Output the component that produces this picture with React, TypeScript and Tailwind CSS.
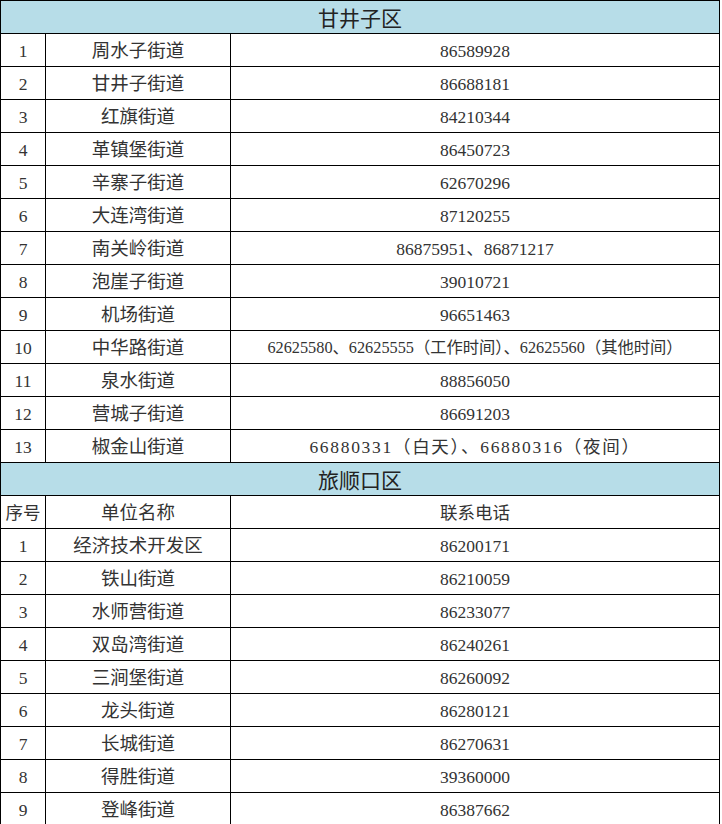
const ganjingzi: [string, string][] = [
  ["周水子街道", "86589928"],
  ["甘井子街道", "86688181"],
  ["红旗街道", "84210344"],
  ["革镇堡街道", "86450723"],
  ["辛寨子街道", "62670296"],
  ["大连湾街道", "87120255"],
  ["南关岭街道", "86875951、86871217"],
  ["泡崖子街道", "39010721"],
  ["机场街道", "96651463"],
  ["中华路街道", "62625580、62625555（工作时间）、62625560（其他时间）"],
  ["泉水街道", "88856050"],
  ["营城子街道", "86691203"],
  ["椒金山街道", "66880331（白天）、66880316（夜间）"],
];

const lvshunkou: [string, string][] = [
  ["经济技术开发区", "86200171"],
  ["铁山街道", "86210059"],
  ["水师营街道", "86233077"],
  ["双岛湾街道", "86240261"],
  ["三涧堡街道", "86260092"],
  ["龙头街道", "86280121"],
  ["长城街道", "86270631"],
  ["得胜街道", "39360000"],
  ["登峰街道", "86387662"],
];

function SectionHeader({ title }: { title: string }) {
  return (
    <tr className="h-[33px] bg-[#b7dde8]">
      <td
        colSpan={3}
        className="border border-black text-center text-[21px] text-[#222] pt-[1px]"
        style={{ fontFamily: '"Noto Sans CJK SC", sans-serif' }}
      >
        {title}
      </td>
    </tr>
  );
}

function Row({ no, name, phone }: { no: string; name: string; phone: string }) {
  // long phone cells are set smaller in the source sheet
  let phoneCls = "text-[17.5px]";
  if (phone.length > 30) phoneCls = "text-[16.3px]";
  else if (phone.length > 20) phoneCls = "text-[17.5px] tracking-[1.7px]";
  return (
    <tr className="h-[33px]">
      <td className="border border-black text-center text-[17.5px] pt-[3px]">{no}</td>
      <td className="border border-black text-center text-[18.5px] pt-[3px]">{name}</td>
      <td className={`border border-black text-center pt-[3px] ${phoneCls}`}>{phone}</td>
    </tr>
  );
}

export default function App() {
  return (
    <div className="w-[722px] h-[824px] overflow-hidden bg-white">
      <table
        className="w-[720px] border-collapse table-fixed text-[#333] leading-none"
        style={{ fontFamily: '"Liberation Serif", "Noto Sans CJK SC", serif' }}
      >
        <colgroup>
          <col className="w-[45px]" />
          <col className="w-[185px]" />
          <col />
        </colgroup>
        <tbody>
          <SectionHeader title="甘井子区" />
          {ganjingzi.map(([name, phone], i) => (
            <Row key={name} no={String(i + 1)} name={name} phone={phone} />
          ))}
          <SectionHeader title="旅顺口区" />
          <Row no="序号" name="单位名称" phone="联系电话" />
          {lvshunkou.map(([name, phone], i) => (
            <Row key={name} no={String(i + 1)} name={name} phone={phone} />
          ))}
        </tbody>
      </table>
    </div>
  );
}
